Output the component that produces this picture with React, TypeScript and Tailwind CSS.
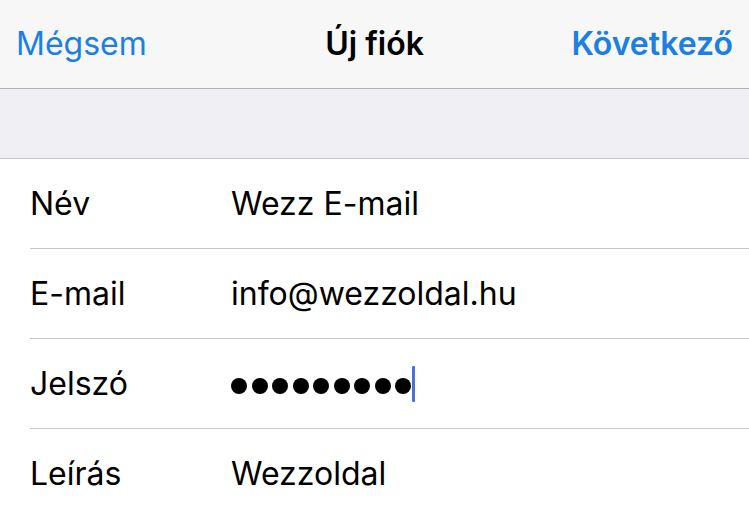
import React from "react";

const rows: { label: string; value: string; password?: boolean }[] = [
  { label: "Név", value: "Wezz E-mail" },
  { label: "E-mail", value: "info@wezzoldal.hu" },
  { label: "Jelszó", value: "", password: true },
  { label: "Leírás", value: "Wezzoldal" },
];

export default function App() {
  return (
    <div
      className="w-[749px] h-[518px] overflow-hidden bg-[#efeff4] text-black"
      style={{ fontFamily: "Inter, 'Noto Sans', sans-serif" }}
    >
      <div className="h-[89px] bg-[#f7f7f8] border-b border-[#b2b2b2] flex items-center justify-between px-[16px] text-[32px] leading-none">
        <span className="text-[#1b7fe3] w-[180px]">Mégsem</span>
        <span className="font-semibold">Új fiók</span>
        <span className="text-[#1b7fe3] font-semibold w-[180px] text-right">Következő</span>
      </div>
      <div className="h-[70px] border-b border-[#c8c7cc]" />
      <div className="bg-white">
        {rows.map((r, i) => (
          <div key={r.label} className="pl-[30px]">
            <div className="flex items-center text-[32px] leading-none h-[89px]">
              <span className="w-[201px] shrink-0">{r.label}</span>
              {r.password ? (
                <span className="flex items-center">
                  <span className="flex gap-[4.5px] mt-[4px]">
                    {Array.from({ length: 9 }).map((_, k) => (
                      <span key={k} className="w-[16px] h-[16px] rounded-full bg-black" />
                    ))}
                  </span>
                  <span className="w-[3px] h-[36px] bg-[#4b70d9] ml-[1px] rounded-[1px]" />
                </span>
              ) : (
                <span>{r.value}</span>
              )}
            </div>
            {i < rows.length - 1 && <div className="h-px bg-[#c8c7cc]" />}
          </div>
        ))}
        <div className="h-px bg-[#c8c7cc]" />
      </div>
    </div>
  );
}
